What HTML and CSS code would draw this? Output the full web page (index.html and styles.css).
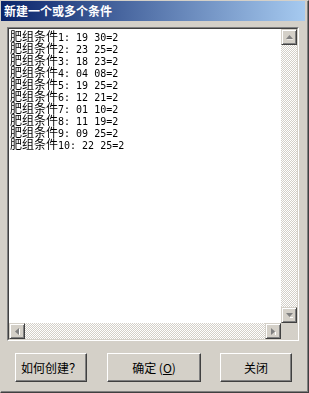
FILE: index.html
```html
<!DOCTYPE html>
<html lang="zh">
<head>
<meta charset="utf-8">
<title>新建一个或多个条件</title>
<link rel="stylesheet" href="styles.css">
</head>
<body>
<div class="window">
  <div class="frame">
    <div class="titlebar">新建一个或多个条件</div>
    <div class="edit">
      <div class="edit-grid">
        <div class="text"><div class="line"><span class="cn">肥组条件</span>1: 19 30=2</div><div class="line"><span class="cn">肥组条件</span>2: 23 25=2</div><div class="line"><span class="cn">肥组条件</span>3: 18 23=2</div><div class="line"><span class="cn">肥组条件</span>4: 04 08=2</div><div class="line"><span class="cn">肥组条件</span>5: 19 25=2</div><div class="line"><span class="cn">肥组条件</span>6: 12 21=2</div><div class="line"><span class="cn">肥组条件</span>7: 01 10=2</div><div class="line"><span class="cn">肥组条件</span>8: 11 19=2</div><div class="line"><span class="cn">肥组条件</span>9: 09 25=2</div><div class="line"><span class="cn">肥组条件</span>10: 22 25=2</div></div>
        <div class="vscroll">
          <div class="sbtn"><svg width="7" height="5" viewBox="0 0 7 5"><path d="M3.5 0 L7 4 L0 4 Z" fill="#808080"/><path d="M1 5 H7" stroke="#fff" stroke-width="1"/></svg></div>
          <div class="track"></div>
          <div class="sbtn"><svg width="7" height="5" viewBox="0 0 7 5"><path d="M0 0 L7 0 L3.5 4 Z" fill="#808080"/><path d="M4 4.5 H7" stroke="#fff" stroke-width="1"/></svg></div>
        </div>
        <div class="hscroll">
          <div class="sbtn"><svg width="5" height="7" viewBox="0 0 5 7"><path d="M0 3.5 L4 0 L4 7 Z" fill="#808080"/><path d="M4.5 1 V7" stroke="#fff" stroke-width="1"/></svg></div>
          <div class="track"></div>
          <div class="sbtn"><svg width="5" height="7" viewBox="0 0 5 7"><path d="M0 0 L4 3.5 L0 7 Z" fill="#808080"/><path d="M4.5 4 V7" stroke="#fff" stroke-width="1"/></svg></div>
        </div>
        <div class="corner"></div>
      </div>
    </div>
    <div class="buttons">
      <button class="btn btn-help">如何创建？</button>
      <button class="btn btn-ok">确定 (<u>O</u>)</button>
      <button class="btn btn-close">关闭</button>
    </div>
  </div>
</div>
</body>
</html>
```
FILE: styles.css
```css
html, body {
  margin: 0;
  padding: 0;
  background: #d4d0c8;
}
body {
  font-family: "Noto Sans CJK SC", "DejaVu Sans", sans-serif;
  -webkit-font-smoothing: antialiased;
}
.window {
  width: 309px;
  height: 393px;
  box-sizing: border-box;
  border-top: 1px solid #d4d0c8;
  border-left: 1px solid #d4d0c8;
  border-right: 1px solid #404040;
  border-bottom: 1px solid #404040;
  background: #d4d0c8;
}
.frame {
  height: 100%;
  box-sizing: border-box;
  border-right: 1px solid #808080;
  border-bottom: 1px solid #808080;
  padding-right: 2px;
  display: flex;
  flex-direction: column;
}
.titlebar {
  height: 20px;
  line-height: 20px;
  padding-left: 3px;
  color: #fff;
  font-weight: bold;
  font-size: 12px;
  background: linear-gradient(to right, #0a246a, #a6caf0);
  white-space: nowrap;
}
.edit {
  margin: 6px 6px 0 6px;
  height: 314px;
  box-sizing: border-box;
  border: 1px solid;
  border-color: #808080 #fff #fff #808080;
}
.edit-grid {
  height: 100%;
  box-sizing: border-box;
  border: 1px solid;
  border-color: #404040 #d4d0c8 #d4d0c8 #404040;
  display: grid;
  grid-template-columns: 1fr 16px;
  grid-template-rows: 1fr 16px;
}
.text {
  background: #fff;
  padding: 1px 0 0 1px;
  font-family: "DejaVu Sans Mono", "Liberation Mono", monospace;
  font-size: 10px;
  color: #000;
  overflow: hidden;
  filter: grayscale(1);
}
.line {
  height: 12px;
  line-height: 12px;
  white-space: nowrap;
}
.cn {
  font-family: "Noto Sans CJK SC", sans-serif;
  font-size: 12px;
  line-height: 12px;
}
.vscroll {
  display: flex;
  flex-direction: column;
}
.hscroll {
  display: flex;
  flex-direction: row;
}
.track {
  flex: 1;
  background: repeating-conic-gradient(#d4d0c8 0 25%, #fff 0 50%) 0 0 / 2px 2px;
}
.sbtn {
  width: 16px;
  height: 16px;
  box-sizing: border-box;
  background: #d4d0c8;
  border: 1px solid;
  border-color: #d4d0c8 #404040 #404040 #d4d0c8;
  box-shadow: inset 1px 1px #fff, inset -1px -1px #808080;
  display: flex;
  align-items: center;
  justify-content: center;
  flex: none;
}
.corner {
  background: #d4d0c8;
}
.buttons {
  display: flex;
  margin-top: 12px;
  padding-left: 14px;
  column-gap: 19px;
}
.btn {
  height: 29px;
  box-sizing: border-box;
  background: #d4d0c8;
  border: 1px solid;
  border-color: #fff #404040 #404040 #fff;
  box-shadow: inset -1px -1px #808080;
  font-family: "Noto Sans CJK SC", sans-serif;
  font-size: 12px;
  color: #000;
  padding: 0;
  margin: 0;
}
.btn-help {
  width: 72px;
  margin-right: 1px;
}
.btn-ok {
  width: 94px;
}
.btn-close {
  width: 72px;
}
```
